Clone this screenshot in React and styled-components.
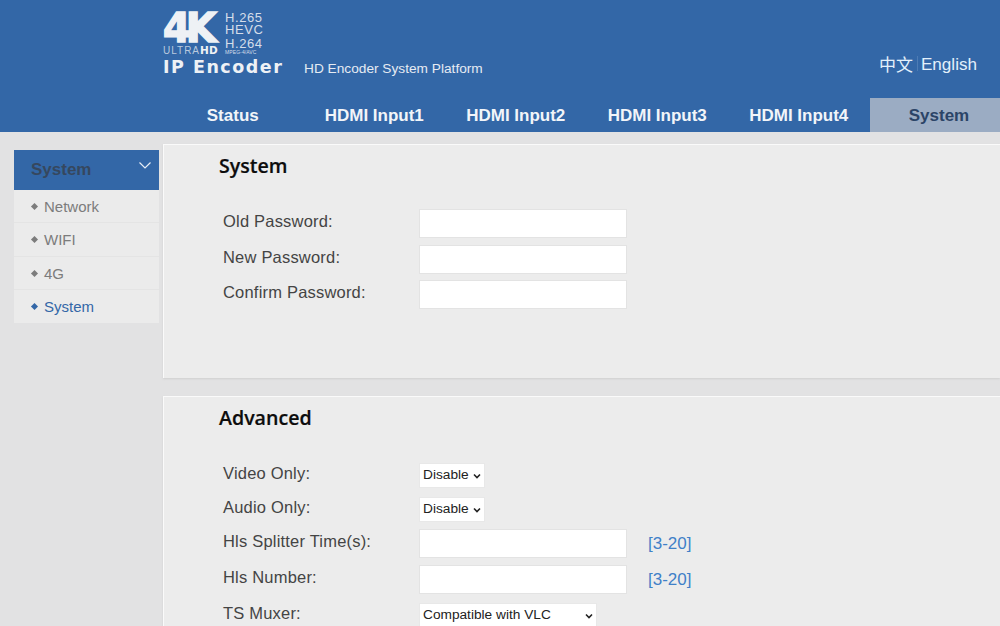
import styled, { createGlobalStyle } from "styled-components";

const GlobalStyle = createGlobalStyle`
  html, body {
    margin: 0;
    height: 100%;
    overflow: hidden;
    background: #e2e2e3;
    font-family: "Liberation Sans", Arial, sans-serif;
  }
  #root {
    height: 626px;
    overflow: hidden;
  }
  * {
    box-sizing: border-box;
  }
`;

const Header = styled.header`
  height: 98px;
  background: #3367a7;
  display: flex;
  align-items: flex-start;
  padding-left: 163px;
  color: #fff;
`;

const Logo = styled.div`
  width: 120px;
  padding-top: 10px;
  display: flex;
  flex-direction: column;
  color: #eef1f5;
`;

const LogoTop = styled.div`
  display: flex;
  height: 47px;
`;

const LogoMark = styled.div`
  width: 62px;
  display: flex;
  flex-direction: column;
`;

const FourK = styled.span`
  font-family: "DejaVu Sans", sans-serif;
  font-weight: 700;
  font-size: 40px;
  line-height: 36px;
  height: 35px;
  letter-spacing: -5px;
  -webkit-text-stroke: 1.6px #eef1f5;
`;

const UltraHd = styled.span`
  font-size: 10px;
  line-height: 11px;
  letter-spacing: 1px;
  color: #b9c9de;
  white-space: nowrap;

  b {
    color: #eef1f5;
    font-family: "DejaVu Sans", sans-serif;
    font-size: 10.5px;
    letter-spacing: 0.2px;
  }
`;

const Codecs = styled.div`
  display: flex;
  flex-direction: column;
  font-size: 13px;
  line-height: 12px;
  letter-spacing: 0.6px;
  color: #d5deea;
  padding-top: 2px;
`;

const Codec = styled.span`
  margin-top: ${({ $gap }) => $gap || "0"};
`;

const Mpeg = styled.span`
  font-size: 5px;
  line-height: 5px;
  letter-spacing: 0.1px;
`;

const Product = styled.div`
  font-family: "DejaVu Sans", sans-serif;
  font-weight: 700;
  font-size: 17.5px;
  line-height: 20px;
  letter-spacing: 1.5px;
  white-space: nowrap;
`;

const Tagline = styled.div`
  margin: 60px 0 0 21px;
  font-size: 13.7px;
  line-height: 18px;
  color: #e6ebf3;
  white-space: nowrap;
`;

const Lang = styled.div`
  margin: 54px 23px 0 auto;
  display: flex;
  align-items: center;
  font-size: 17.1px;
  line-height: 22px;
  color: #e3f0fb;
  white-space: nowrap;
`;

const LangCn = styled.span`
  font-family: "Noto Sans CJK SC", sans-serif;
  font-size: 17px;
  padding-right: 4px;
  margin: -3px 3px 0 0;
  border-right: 1px solid #4d7cb5;
  line-height: 15px;
`;

const Nav = styled.nav`
  height: 34px;
  background: #3367a7;
  display: flex;
  padding-left: 162px;
  overflow: hidden;
`;

const NavItem = styled.a`
  flex: 0 0 ${({ $active }) => ($active ? "139px" : "141.5px")};
  height: 34px;
  line-height: 35px;
  text-align: center;
  font-size: 17px;
  font-weight: 700;
  color: ${({ $active }) => ($active ? "#2b4467" : "#f2f5f9")};
  background: ${({ $active }) => ($active ? "#9bacc3" : "transparent")};
`;

const Body = styled.div`
  display: flex;
  align-items: flex-start;
  padding: 12px 0 0 14px;
`;

const Sidebar = styled.aside`
  flex: 0 0 145px;
  margin: 6px 4px 0 0;
  background: #ebebeb;
`;

const SideTitle = styled.div`
  height: 40px;
  background: #3367a7;
  color: #36475e;
  font-size: 17px;
  font-weight: 700;
  line-height: 40px;
  padding-left: 17px;
  display: flex;
  justify-content: space-between;
`;

const Chevron = styled.svg`
  width: 14px;
  height: 10px;
  margin: 10px 7px 0 0;
`;

const SideItem = styled.a`
  display: flex;
  align-items: center;
  height: 33.3px;
  padding: 1px 0 0 17px;
  font-size: 15px;
  color: ${({ $active }) => ($active ? "#3367a7" : "#7c7c7c")};
  border-bottom: 1px solid ${({ $last }) => ($last ? "transparent" : "#e4e4e4")};

  &::before {
    content: "";
    width: 5px;
    height: 5px;
    margin: 0 7px 0 1px;
    background: ${({ $active }) => ($active ? "#3367a7" : "#7c7c7c")};
    transform: rotate(45deg);
  }
`;

const Main = styled.main`
  flex: 1;
  display: flex;
  flex-direction: column;
  gap: 18px;
`;

const Panel = styled.section`
  height: ${({ $height }) => $height};
  background: #ececec;
  border-top: 1px solid #fafafa;
  border-left: 1px solid #fafafa;
  box-shadow: 0 1px 2px #cfcfcf;
  padding-left: 55px;
`;

const PanelTitle = styled.h2`
  margin: 0;
  padding-top: 7px;
  height: ${({ $gap }) => $gap};
  font-family: "Open Sans", sans-serif;
  font-size: 19.6px;
  line-height: 28px;
  font-weight: 600;
  color: #0c0c0c;
  -webkit-text-stroke: 0.2px #0c0c0c;
`;

const Row = styled.div`
  display: flex;
  align-items: flex-start;
  height: ${({ $height }) => $height};
  padding-left: 4px;
`;

const Label = styled.label`
  flex: 0 0 196px;
  margin-top: ${({ $compact }) => ($compact ? "-2px" : "0")};
  font-size: 16.5px;
  line-height: 24px;
  letter-spacing: 0.2px;
  color: #444;
  white-space: nowrap;
`;

const TextInput = styled.input`
  width: 208px;
  height: 29px;
  background: #fff;
  border: 1px solid #e3e3e3;
  outline: none;
`;

const Select = styled.select`
  appearance: none;
  width: ${({ $width }) => $width};
  height: 25px;
  padding: 0 0 2px 3px;
  font-family: "Liberation Sans", Arial, sans-serif;
  font-size: 13.7px;
  color: #222;
  background: #fff url("data:image/svg+xml,%3Csvg xmlns='http://www.w3.org/2000/svg' width='8' height='6'%3E%3Cpath d='M1 1.5l3 3 3-3' fill='none' stroke='%23222' stroke-width='1.6'/%3E%3C/svg%3E") no-repeat right 3px center;
  border: 1px solid #e8e8e8;
  outline: none;
`;

const Range = styled.span`
  margin: 4px 0 0 21px;
  font-size: 17px;
  line-height: 22px;
  color: #3f80c8;
`;

const NAV = ["Status", "HDMI Input1", "HDMI Input2", "HDMI Input3", "HDMI Input4", "System"];
const SIDE = ["Network", "WIFI", "4G", "System"];
const PASSWORDS = ["Old Password:", "New Password:", "Confirm Password:"];

export default function App() {
  return (
    <>
      <GlobalStyle />
      <Header>
        <Logo>
          <LogoTop>
            <LogoMark>
              <FourK>4K</FourK>
              <UltraHd>
                ULTRA<b>HD</b>
              </UltraHd>
            </LogoMark>
            <Codecs>
              <Codec>H.265</Codec>
              <Codec>HEVC</Codec>
              <Codec $gap="2px">H.264</Codec>
              <Mpeg>MPEG-4/AVC</Mpeg>
            </Codecs>
          </LogoTop>
          <Product>IP Encoder</Product>
        </Logo>
        <Tagline>HD Encoder System Platform</Tagline>
        <Lang>
          <LangCn>中文</LangCn>
          English
        </Lang>
      </Header>
      <Nav>
        {NAV.map((item, i) => (
          <NavItem key={item} $active={i === NAV.length - 1}>
            {item}
          </NavItem>
        ))}
      </Nav>
      <Body>
        <Sidebar>
          <SideTitle>
            System
            <Chevron viewBox="0 0 14 10" fill="none" stroke="#e8eef6" strokeWidth="1.2">
              <path d="M1.5 2.5 7 8l5.5-5.5" />
            </Chevron>
          </SideTitle>
          {SIDE.map((item, i) => (
            <SideItem key={item} $active={i === 3} $last={i === 3}>
              {item}
            </SideItem>
          ))}
        </Sidebar>
        <Main>
          <Panel $height="234px">
            <PanelTitle $gap="64px">System</PanelTitle>
            {PASSWORDS.map((label) => (
              <Row key={label} $height="35.5px">
                <Label>{label}</Label>
                <TextInput type="password" />
              </Row>
            ))}
          </Panel>
          <Panel $height="300px">
            <PanelTitle $gap="66px">Advanced</PanelTitle>
            <Row $height="34px">
              <Label $compact>Video Only:</Label>
              <Select $width="66px" defaultValue="Disable">
                <option>Disable</option>
              </Select>
            </Row>
            <Row $height="32px">
              <Label $compact>Audio Only:</Label>
              <Select $width="66px" defaultValue="Disable">
                <option>Disable</option>
              </Select>
            </Row>
            <Row $height="36px">
              <Label>Hls Splitter Time(s):</Label>
              <TextInput />
              <Range>[3-20]</Range>
            </Row>
            <Row $height="38px">
              <Label>Hls Number:</Label>
              <TextInput />
              <Range>[3-20]</Range>
            </Row>
            <Row $height="30px">
              <Label $compact>TS Muxer:</Label>
              <Select $width="178px" defaultValue="Compatible with VLC">
                <option>Compatible with VLC</option>
              </Select>
            </Row>
          </Panel>
        </Main>
      </Body>
    </>
  );
}
